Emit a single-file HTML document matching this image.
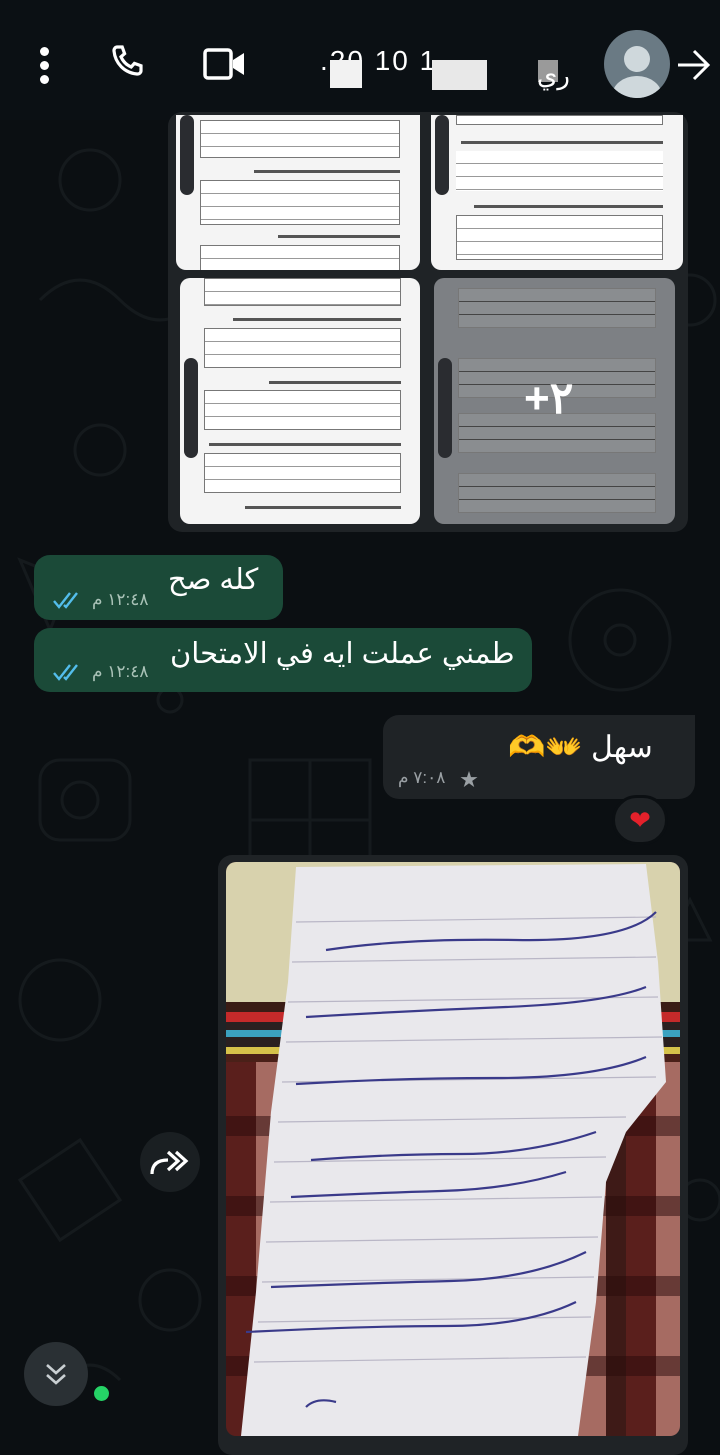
<!DOCTYPE html>
<html><head><meta charset="utf-8"><style>
*{margin:0;padding:0;box-sizing:border-box}
body{width:720px;height:1440px;overflow:hidden;background:#0b0f12;font-family:"Liberation Sans","Noto Sans CJK SC",sans-serif;position:relative}
.abs{position:absolute}
.bg{left:0;top:0;width:720px;height:1440px;opacity:.35}
.top{left:0;top:0;width:720px;height:120px;background:#0b1014}
.doc{background:#f4f4f4;overflow:hidden;border-radius:10px}
.doc .ln{position:absolute;left:10%;right:8%;background:repeating-linear-gradient(#fff 0 12px,#999 12px 13px);border:1px solid #777}
.doc .t{position:absolute;right:8%;height:3px;background:#555}
.tb{position:absolute;left:4px;width:14px;border-radius:7px;background:#2a2c30}
.bub{border-radius:16px;color:#fff;direction:rtl}
.green{background:#1b4a38}
.gray{background:#1f2326}
.time{font-size:17px;color:#a9c2b7}
</style></head><body>
<svg class="abs bg" viewBox="0 0 720 1440" fill="none" stroke="#2a3034" stroke-width="3">
<circle cx="90" cy="180" r="30"/><circle cx="620" cy="640" r="50"/><circle cx="620" cy="640" r="15"/><rect x="40" y="760" width="90" height="80" rx="20"/><circle cx="80" cy="800" r="18"/><path d="M250 760h120v120h-120zM310 760v120M250 820h120"/><circle cx="60" cy="1000" r="40"/><path d="M20 1180l60-40 40 60-60 40z"/><circle cx="170" cy="1300" r="30"/><path d="M40 300q40-40 80 0t80 0"/><circle cx="100" cy="450" r="25"/><path d="M20 560l50 20-20 50z"/><circle cx="690" cy="300" r="25"/><path d="M690 900l20 40-40 0z"/><circle cx="170" cy="700" r="12"/><path d="M60 1380q30-30 60 0"/><circle cx="700" cy="1200" r="20"/>
</svg>
<div class="abs top"></div>
<div class="abs" style="left:40px;top:47px;width:9px;height:9px;border-radius:50%;background:#fff;box-shadow:0 14px 0 #fff,0 28px 0 #fff"></div>
<svg class="abs" style="left:104px;top:40px" width="48" height="48" viewBox="0 0 24 24"><path d="M6.6 3.5l2.5 0 1.2 3.3-1.8 1.6c1 2.3 2.8 4.1 5.1 5.1l1.6-1.8 3.3 1.2 0 2.5c0 1-1 1.7-2 1.6C10.3 16.4 5.6 11.7 5 5.5c-.1-1 .6-2 1.6-2z" fill="none" stroke="#fff" stroke-width="1.6"/></svg>
<svg class="abs" style="left:203px;top:45px" width="44" height="38" viewBox="0 0 44 38"><rect x="2" y="5" width="26" height="28" rx="3" fill="none" stroke="#fff" stroke-width="3.5"/><path d="M30 15l11-7v22l-11-7z" fill="#fff"/></svg>
<div class="abs" style="left:320px;top:45px;color:#fff;font-size:28px;letter-spacing:2px">.20 10 1</div>
<div class="abs" style="left:330px;top:60px;width:32px;height:28px;background:#f2f2f2"></div>
<div class="abs" style="left:432px;top:60px;width:55px;height:30px;background:#e8e8e8"></div>
<div class="abs" style="left:538px;top:60px;width:20px;height:22px;background:#9a9a9a"></div>
<div class="abs" style="left:537px;top:60px;color:#fff;font-size:26px">ري</div>
<div class="abs" style="left:604px;top:30px;width:66px;height:68px;border-radius:50%;background:#6a7a84;overflow:hidden">
<div class="abs" style="left:20px;top:16px;width:26px;height:26px;border-radius:50%;background:#cfd8dc"></div>
<div class="abs" style="left:8px;top:46px;width:50px;height:40px;border-radius:50%;background:#cfd8dc"></div></div>
<svg class="abs" style="left:676px;top:48px" width="36" height="34" viewBox="0 0 36 34"><path d="M2 17h30M18 3l14 14-14 14" fill="none" stroke="#fff" stroke-width="3"/></svg>

<div class="abs" style="left:168px;top:112px;width:520px;height:420px;background:#1f2326;border-radius:14px"></div>
<div class="abs doc" style="left:176px;top:115px;width:244px;height:155px;border-radius:0 0 10px 10px">
<div class="ln" style="top:5px;height:38px"></div><div class="t" style="top:55px;width:60%"></div><div class="ln" style="top:65px;height:45px"></div><div class="t" style="top:120px;width:50%"></div><div class="ln" style="top:130px;height:40px"></div>
<div class="tb" style="top:0;height:80px"></div></div>
<div class="abs doc" style="left:431px;top:115px;width:252px;height:155px;border-radius:0 0 10px 10px">
<div class="ln" style="top:0;height:10px"></div><div class="t" style="top:26px;width:80%"></div><div class="ln" style="top:36px;height:40px;border:none"></div><div class="t" style="top:90px;width:75%"></div><div class="ln" style="top:100px;height:45px"></div>
<div class="tb" style="top:0;height:80px"></div></div>
<div class="abs doc" style="left:180px;top:278px;width:240px;height:246px">
<div class="ln" style="top:0;height:28px"></div><div class="t" style="top:40px;width:70%"></div><div class="ln" style="top:50px;height:40px"></div><div class="t" style="top:103px;width:55%"></div><div class="ln" style="top:112px;height:40px"></div><div class="t" style="top:165px;width:80%"></div><div class="ln" style="top:175px;height:40px"></div><div class="t" style="top:228px;width:65%"></div>
<div class="tb" style="top:80px;height:100px"></div></div>
<div class="abs doc" style="left:434px;top:278px;width:241px;height:246px;background:#7d8084">
<div class="ln" style="top:10px;height:40px;background:repeating-linear-gradient(#8a8d90 0 12px,#444 12px 13px)"></div><div class="ln" style="top:80px;height:40px;background:repeating-linear-gradient(#8a8d90 0 12px,#444 12px 13px)"></div><div class="ln" style="top:135px;height:40px;background:repeating-linear-gradient(#8a8d90 0 12px,#444 12px 13px)"></div><div class="ln" style="top:195px;height:40px;background:repeating-linear-gradient(#8a8d90 0 12px,#444 12px 13px)"></div>
<div class="tb" style="top:80px;height:100px"></div>
<div class="abs" style="left:90px;top:95px;color:#fff;font-size:44px;font-weight:bold">+٢</div></div>

<div class="abs bub green" style="left:34px;top:555px;width:249px;height:65px"></div>
<div class="abs" style="left:168px;top:562px;color:#fff;font-size:29px;direction:rtl">كله صح</div>
<div class="abs time" style="left:92px;top:590px;direction:rtl">١٢:٤٨ م</div>
<svg class="abs" style="left:52px;top:590px" width="32" height="20" viewBox="0 0 32 20"><path d="M2 11l5 6L18 3M12 15l2 2L25 3" fill="none" stroke="#53bdeb" stroke-width="2.4"/></svg>
<div class="abs bub green" style="left:34px;top:628px;width:498px;height:64px"></div>
<div class="abs" style="left:170px;top:636px;color:#fff;font-size:29px;direction:rtl">طمني عملت ايه في الامتحان</div>
<div class="abs time" style="left:92px;top:662px;direction:rtl">١٢:٤٨ م</div>
<svg class="abs" style="left:52px;top:662px" width="32" height="20" viewBox="0 0 32 20"><path d="M2 11l5 6L18 3M12 15l2 2L25 3" fill="none" stroke="#53bdeb" stroke-width="2.4"/></svg>

<div class="abs bub gray" style="left:383px;top:715px;width:312px;height:84px;border-radius:16px 0 16px 16px"></div>
<div class="abs" style="left:508px;top:730px;color:#fff;font-size:30px;direction:rtl;white-space:nowrap">سهل 👐🫶</div>
<div class="abs" style="left:398px;top:768px;color:#9aa0a4;font-size:17px;direction:rtl">٧:٠٨ م</div>
<div class="abs" style="left:460px;top:766px;color:#9aa0a4;font-size:18px">★</div>
<div class="abs" style="left:612px;top:795px;width:56px;height:50px;border-radius:25px;background:#1f2326;border:3px solid #0b0f12;text-align:center;font-size:26px;line-height:44px;color:#e4212b">❤</div>

<div class="abs" style="left:218px;top:855px;width:470px;height:600px;background:#1f2326;border-radius:14px"></div>
<div class="abs" style="left:226px;top:862px;width:454px;height:574px;border-radius:10px;overflow:hidden;background:repeating-linear-gradient(90deg,#5a1f1c 0 30px,#a66b62 30px 60px,#3e1a17 60px 80px);">
<div class="abs" style="left:0;top:0;width:454px;height:140px;background:#d8d2ad"></div>
<div class="abs" style="left:0;top:140px;width:454px;height:60px;background:linear-gradient(#3a1c15 0 10px,#c52a2a 10px 20px,#2a2020 20px 28px,#3ba2c0 28px 35px,#2a2020 35px 45px,#d6c24a 45px 52px,#4a2018 52px)"></div>
<div class="abs" style="left:0;top:200px;width:454px;height:374px;background:repeating-linear-gradient(0deg,transparent 0 60px,rgba(40,10,10,.5) 60px 80px)"></div>
<svg class="abs" style="left:0;top:0" width="454" height="574" viewBox="0 0 454 574">
<polygon points="70,5 420,2 432,100 440,220 400,270 380,320 370,440 352,574 15,574 30,430 45,250 62,120" fill="#e9e8ec"/>
<g stroke="#b9b6c6" stroke-width="1.2">
<line x1="70" y1="60" x2="430" y2="55"/><line x1="66" y1="100" x2="430" y2="95"/><line x1="62" y1="140" x2="432" y2="135"/><line x1="60" y1="180" x2="436" y2="175"/><line x1="56" y1="220" x2="430" y2="215"/><line x1="52" y1="260" x2="400" y2="255"/><line x1="48" y1="300" x2="380" y2="295"/><line x1="44" y1="340" x2="376" y2="335"/><line x1="40" y1="380" x2="372" y2="375"/><line x1="36" y1="420" x2="368" y2="415"/><line x1="32" y1="460" x2="365" y2="455"/><line x1="28" y1="500" x2="360" y2="495"/></g>
<g stroke="#3a3a8a" stroke-width="2.2" fill="none">
<path d="M100 88 q80-12 190-10 T430 50"/><path d="M80 155 q100-6 200-10 T420 125"/><path d="M70 222 q100-6 200-6 T420 195"/><path d="M85 298 q80-6 150-6 T370 270"/><path d="M65 335 q80-4 150-6 T340 310"/><path d="M45 425 q100-4 180-6 T360 390"/><path d="M20 470 q120-6 200-6 T350 440"/><path d="M80 545 q10 -10 30 -5"/></g>
</svg></div>

<div class="abs" style="left:140px;top:1132px;width:60px;height:60px;border-radius:50%;background:#1a1f22"></div>
<svg class="abs" style="left:150px;top:1148px" width="40" height="30" viewBox="0 0 40 30"><path d="M2 26c0-10 6-14 16-14M18 4l10 9-10 9M26 4l10 9-10 9" fill="none" stroke="#fff" stroke-width="3.2"/></svg>
<div class="abs" style="left:24px;top:1342px;width:64px;height:64px;border-radius:50%;background:#2a3034"></div>
<svg class="abs" style="left:42px;top:1360px" width="28" height="28" viewBox="0 0 28 28"><path d="M5 5l9 8 9-8M5 15l9 8 9-8" fill="none" stroke="#c9cfd2" stroke-width="2.6"/></svg>
<div class="abs" style="left:94px;top:1386px;width:15px;height:15px;border-radius:50%;background:#25d366"></div>
</body></html>
